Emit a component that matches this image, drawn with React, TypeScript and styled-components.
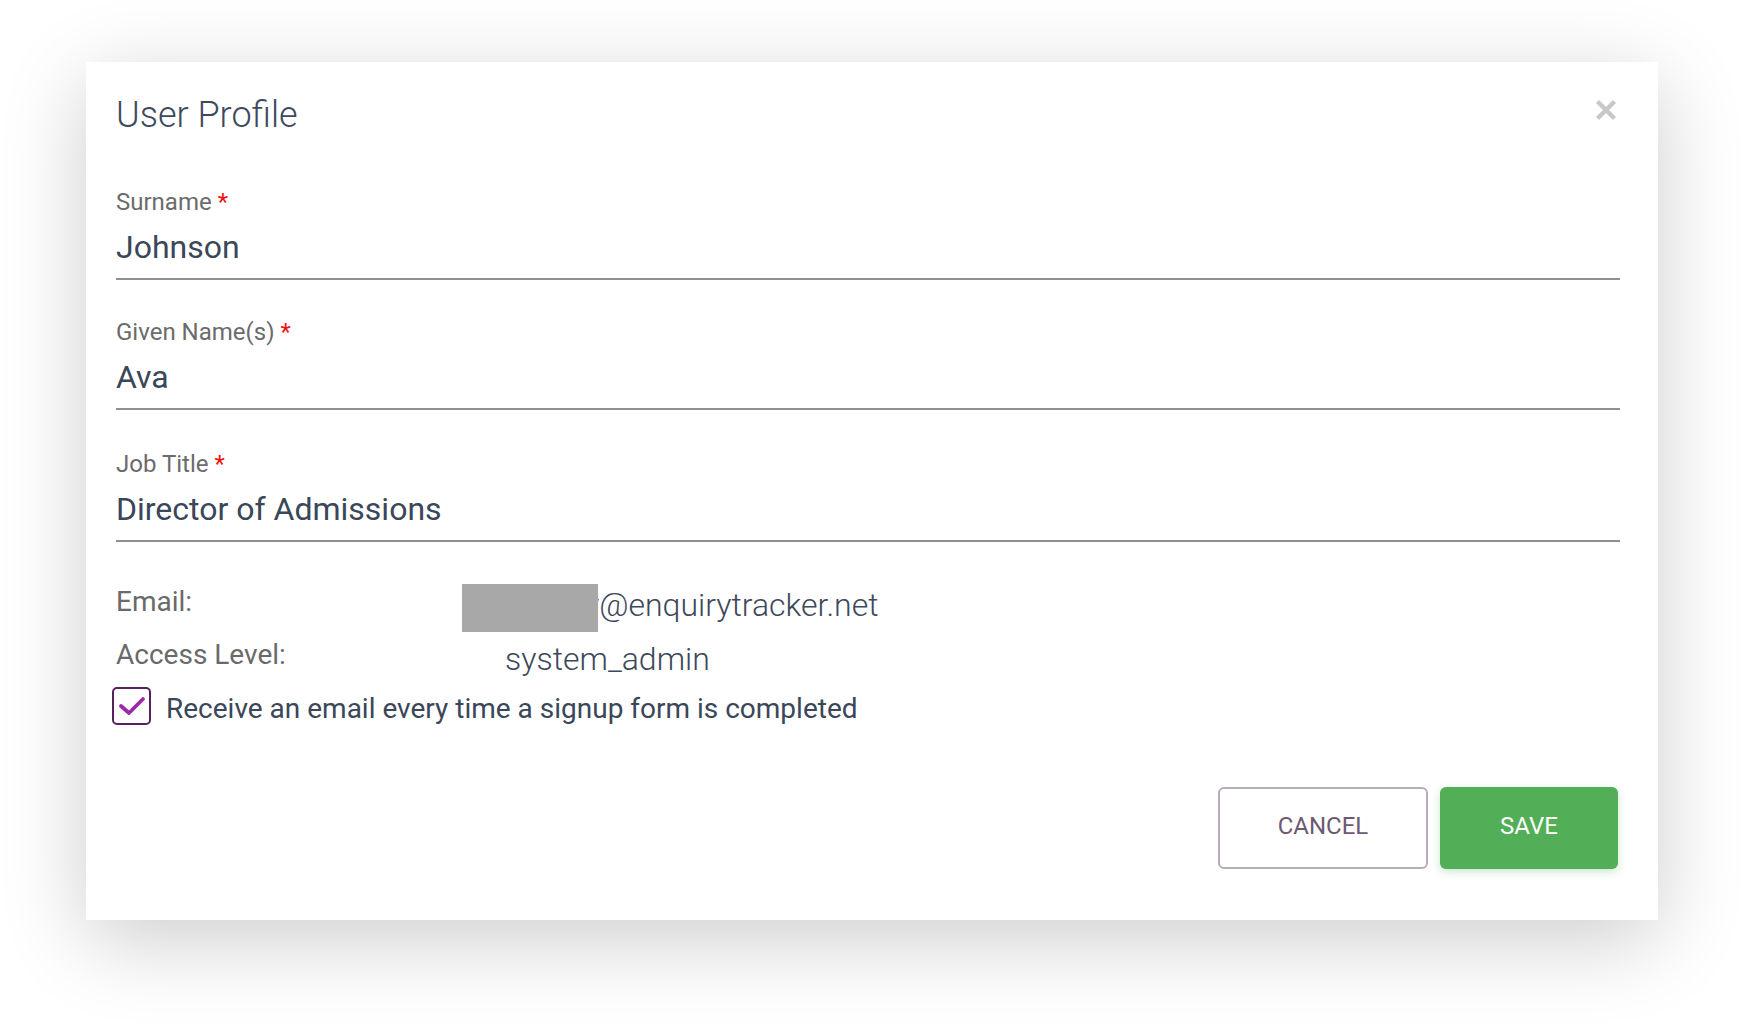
import React from "react";
import styled, { createGlobalStyle } from "styled-components";

const GlobalStyle = createGlobalStyle`
  html, body {
    margin: 0;
    padding: 0;
    background: #ffffff;
  }
  body {
    font-family: "Roboto", "Liberation Sans", sans-serif;
    -webkit-font-smoothing: antialiased;
  }
  * { box-sizing: border-box; }
`;

const Page = styled.div`
  width: 1744px;
  height: 1030px;
  padding: 62px 0 0 86px;
  overflow: hidden;
`;

const Dialog = styled.div`
  width: 1572px;
  height: 858px;
  background: #ffffff;
  box-shadow: 0 20px 80px rgba(0, 0, 0, 0.2);
  padding: 34px 38px 54px 30px;
  display: flex;
  flex-direction: column;
`;

const Header = styled.div`
  display: flex;
  justify-content: space-between;
  align-items: flex-start;
  height: 38px;
  margin-bottom: 54px;
`;

const Title = styled.h2`
  margin: 0;
  font-size: 36px;
  line-height: 38px;
  font-weight: 300;
  color: #3d4a5d;
`;

const CloseButton = styled.button`
  border: 0;
  background: none;
  padding: 0;
  margin: 3px 3px 0 0;
  width: 22px;
  height: 22px;
  cursor: pointer;
  display: flex;
`;

const Field = styled.div<{ $gap: number }>`
  display: flex;
  flex-direction: column;
  margin-top: ${(p) => p.$gap}px;
`;

const Label = styled.label`
  font-size: 24px;
  line-height: 28px;
  color: #6b6b6b;
  margin-bottom: 11px;
`;

const Required = styled.span`
  color: #f01010;
`;

const Value = styled.div`
  font-size: 32px;
  line-height: 40px;
  color: #3a4659;
  padding-bottom: 11px;
  border-bottom: 2px solid #8f8f8f;
`;

const InfoRow = styled.div<{ $top: number }>`
  display: flex;
  align-items: flex-start;
  margin-top: ${(p) => p.$top}px;
`;

const InfoLabel = styled.div`
  width: 346px;
  font-size: 28px;
  line-height: 36px;
  color: #6a6a6a;
`;

const InfoValue = styled.div<{ $indent: number; $offset: number }>`
  display: flex;
  align-items: flex-start;
  padding-left: ${(p) => p.$indent}px;
  margin-top: ${(p) => p.$offset}px;
  font-size: 32px;
  line-height: 36px;
  font-weight: 300;
  color: #3d485a;
`;

const Redacted = styled.span`
  position: relative;
  z-index: 1;
  display: inline-block;
  width: 136px;
  height: 48px;
  background: #a8a8a8;
`;

const EmailText = styled.span`
  margin-left: -14px;
  margin-top: 3px;
`;

const CheckRow = styled.label`
  display: flex;
  align-items: flex-start;
  margin-top: 10px;
  margin-left: -4px;
  cursor: pointer;
`;

const CheckBox = styled.span`
  width: 39px;
  height: 38px;
  border: 2px solid #5a1f5e;
  border-radius: 5px;
  display: flex;
  align-items: center;
  justify-content: center;
  flex-shrink: 0;
`;

const CheckText = styled.span`
  margin-left: 15px;
  margin-top: 3px;
  font-size: 28px;
  line-height: 38px;
  color: #3a4659;
`;

const Actions = styled.div`
  display: flex;
  justify-content: flex-end;
  gap: 12px;
  margin-top: 59px;
  margin-right: 2px;
`;

const Button = styled.button<{ $primary?: boolean }>`
  height: 82px;
  width: ${(p) => (p.$primary ? 178 : 210)}px;
  padding: 0 0 4px;
  border-radius: 6px;
  font-family: "Roboto", "Liberation Sans", sans-serif;
  font-size: 24px;
  font-weight: 400;
  text-transform: uppercase;
  cursor: pointer;
  border: ${(p) => (p.$primary ? "0" : "2px solid #b8acba")};
  background: ${(p) => (p.$primary ? "#52ae57" : "#ffffff")};
  color: ${(p) => (p.$primary ? "#ffffff" : "#6d5a72")};
  box-shadow: ${(p) => (p.$primary ? "0 3px 8px rgba(82, 174, 87, 0.3)" : "none")};
`;

const fields = [
  { label: "Surname", value: "Johnson", gap: 0 },
  { label: "Given Name(s)", value: "Ava", gap: 38 },
  { label: "Job Title", value: "Director of Admissions", gap: 40 },
];

export default function App() {
  return (
    <>
      <GlobalStyle />
      <Page>
        <Dialog>
          <Header>
            <Title>User Profile</Title>
            <CloseButton aria-label="Close">
              <svg width="22" height="22" viewBox="0 0 22 22">
                <path
                  d="M2.5 2.5 L19.5 19.5 M19.5 2.5 L2.5 19.5"
                  stroke="#c8c8c8"
                  strokeWidth="4.4"
                  strokeLinecap="butt"
                  fill="none"
                />
              </svg>
            </CloseButton>
          </Header>

          {fields.map((f) => (
            <Field key={f.label} $gap={f.gap}>
              <Label>
                {f.label} <Required>*</Required>
              </Label>
              <Value>{f.value}</Value>
            </Field>
          ))}

          <InfoRow $top={42}>
            <InfoLabel>Email:</InfoLabel>
            <InfoValue $indent={0} $offset={0}>
              <Redacted />
              <EmailText>y@enquirytracker.net</EmailText>
            </InfoValue>
          </InfoRow>
          <InfoRow $top={5}>
            <InfoLabel>Access Level:</InfoLabel>
            <InfoValue $indent={43} $offset={4}>
              system_admin
            </InfoValue>
          </InfoRow>

          <CheckRow>
            <CheckBox>
              <svg width="28" height="22" viewBox="0 0 28 22">
                <polyline
                  points="3,11 11,18 25,4"
                  stroke="#9c2aa8"
                  strokeWidth="3.8"
                  fill="none"
                  strokeLinecap="round"
                  strokeLinejoin="round"
                />
              </svg>
            </CheckBox>
            <CheckText>Receive an email every time a signup form is completed</CheckText>
          </CheckRow>

          <Actions>
            <Button>Cancel</Button>
            <Button $primary>Save</Button>
          </Actions>
        </Dialog>
      </Page>
    </>
  );
}
